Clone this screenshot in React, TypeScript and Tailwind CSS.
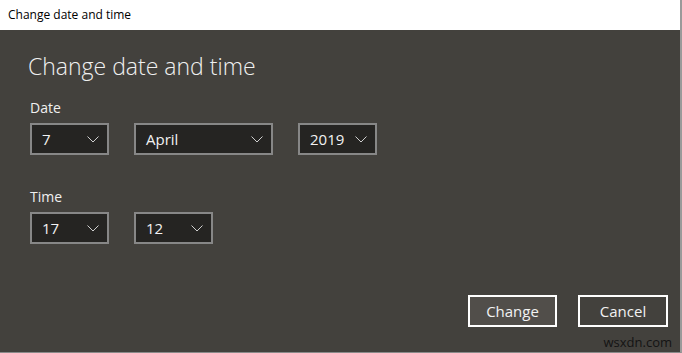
import React from "react";

function Chevron() {
  return (
    <svg width="12" height="7" viewBox="0 0 12 7" fill="none" className="shrink-0">
      <path d="M0.5 0.5 L6 6 L11.5 0.5" stroke="#cfcfcf" strokeWidth="1" />
    </svg>
  );
}

function Select({ value, width }: { value: string; width: string }) {
  return (
    <div
      className={`${width} h-[32px] border-2 border-[#878787] bg-[#252422] flex items-center justify-between pl-[10px] pr-[8px] text-[15px] text-[#f2f2f2]`}
    >
      <span>{value}</span>
      <Chevron />
    </div>
  );
}

export default function App() {
  return (
    <div
      className="relative w-[682px] h-[353px] flex flex-col border-r-2 border-b border-r-[#9a9a9a] border-b-[#8a8a8a] bg-[#43413d] overflow-hidden"
      style={{ fontFamily: '"Open Sans", "Noto Sans", sans-serif' }}
    >
      <div className="h-[30px] bg-white flex items-center pl-[8px] text-[12px] text-black">
        Change date and time
      </div>
      <div className="flex-1 flex flex-col pl-[28px] pt-[20px]">
        <div className="text-[23px] leading-[32px] font-light text-[#f0f0f0]">Change date and time</div>
        <div className="mt-[16px] ml-[2px] text-[14px] leading-[20px] text-[#f0f0f0]">Date</div>
        <div className="mt-[5px] ml-[2px] flex gap-[25px]">
          <Select value="7" width="w-[79px]" />
          <Select value="April" width="w-[139px]" />
          <Select value="2019" width="w-[79px]" />
        </div>
        <div className="mt-[32px] ml-[2px] text-[14px] leading-[20px] text-[#f0f0f0]">Time</div>
        <div className="mt-[5px] ml-[2px] flex gap-[25px]">
          <Select value="17" width="w-[79px]" />
          <Select value="12" width="w-[79px]" />
        </div>
        <div className="mt-[51px] flex justify-end gap-[21px] pr-[12px]">
          <div className="w-[89px] h-[32px] border-2 border-white bg-[#514e4a] flex items-center justify-center text-[15px] text-[#f2f2f2]">
            Change
          </div>
          <div className="w-[90px] h-[32px] border-2 border-white flex items-center justify-center text-[15px] text-[#f2f2f2]">
            Cancel
          </div>
        </div>
      </div>
      <div className="absolute right-[8px] bottom-[2px] text-[13px] leading-[16px] text-[#141414]">wsxdn.com</div>
    </div>
  );
}
